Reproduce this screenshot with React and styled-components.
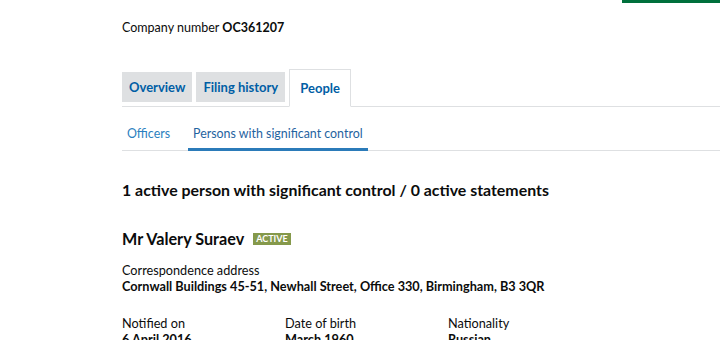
import React from "react";
import styled, { createGlobalStyle } from "styled-components";

const GlobalStyle = createGlobalStyle`
  body {
    margin: 0;
    background: #ffffff;
    font-family: Lato, "Liberation Sans", sans-serif;
    color: #0b0c0c;
  }
`;

const Page = styled.div`
  width: 720px;
  height: 340px;
  overflow: hidden;
`;

const TopBar = styled.div`
  display: flex;
  justify-content: flex-end;
`;

const SignIn = styled.div`
  width: 98px;
  height: 3px;
  background: #00703c;
`;

const Main = styled.div`
  padding-left: 122px;
`;

const CompanyNumber = styled.p`
  margin: 16px 0 0;
  font-size: 12.5px;
  line-height: 18px;
  strong {
    font-weight: 700;
  }
`;

const Tabs = styled.ul`
  display: flex;
  align-items: flex-end;
  gap: 4px;
  list-style: none;
  margin: 32px 0 0;
  padding: 0;
  border-bottom: 1px solid #dee0e2;
  height: 37px;
`;

const Tab = styled.li`
  box-sizing: border-box;
  display: flex;
  align-items: center;
  height: ${(p) => (p.$active ? "38px" : "30px")};
  margin-bottom: ${(p) => (p.$active ? "-1px" : "4px")};
  background: ${(p) => (p.$active ? "#ffffff" : "#dee0e2")};
  border: ${(p) => (p.$active ? "1px solid #dee0e2" : "none")};
  border-bottom: ${(p) => (p.$active ? "1px solid #ffffff" : "none")};
  padding: ${(p) => (p.$active ? "0 10px" : "0 7px")};
  font-size: 13px;
  font-weight: 700;
  color: #005ea5;
`;

const SubNav = styled.div`
  display: flex;
  align-items: flex-end;
  gap: 13px;
  border-bottom: 1px solid #dee0e2;
  height: 43px;
`;

const SubLink = styled.div`
  box-sizing: border-box;
  padding: 0 5px 6px;
  font-size: 12.4px;
  line-height: 16px;
  color: ${(p) => (p.$active ? "#1f63a0" : "#2b7fc0")};
  border-bottom: 3px solid ${(p) => (p.$active ? "#2b7bb9" : "transparent")};
  margin-bottom: -1px;
`;

const Heading = styled.h2`
  margin: 29px 0 0;
  font-size: 15.9px;
  line-height: 20px;
  font-weight: 700;
`;

const Person = styled.div`
  margin-top: 28px;
`;

const NameRow = styled.div`
  display: flex;
  align-items: center;
  gap: 9px;
`;

const Name = styled.h3`
  margin: 0;
  font-size: 16.2px;
  line-height: 22px;
  font-weight: 700;
`;

const Badge = styled.span`
  background: #85994b;
  color: #ffffff;
  font-size: 9px;
  font-weight: 700;
  line-height: 10px;
  padding: 1px 3px;
`;

const Field = styled.div`
  display: flex;
  flex-direction: column;
  font-size: 12.7px;
  line-height: 16px;
`;

const Label = styled.span`
  color: #0b0c0c;
`;

const Value = styled.span`
  font-weight: 700;
`;

const Details = styled.div`
  display: grid;
  grid-template-columns: repeat(3, 163px);
  margin-top: 21px;
`;

const AddressBlock = styled(Field)`
  margin-top: 12px;
`;

export default function App() {
  return (
    <Page>
      <GlobalStyle />
      <TopBar>
        <SignIn />
      </TopBar>
      <Main>
        <CompanyNumber>
          Company number <strong>OC361207</strong>
        </CompanyNumber>
        <Tabs>
          <Tab>Overview</Tab>
          <Tab>Filing history</Tab>
          <Tab $active>People</Tab>
        </Tabs>
        <SubNav>
          <SubLink>Officers</SubLink>
          <SubLink $active>Persons with significant control</SubLink>
        </SubNav>
        <Heading>1 active person with significant control / 0 active statements</Heading>
        <Person>
          <NameRow>
            <Name>Mr Valery Suraev</Name>
            <Badge>ACTIVE</Badge>
          </NameRow>
          <AddressBlock>
            <Label>Correspondence address</Label>
            <Value>Cornwall Buildings 45-51, Newhall Street, Office 330, Birmingham, B3 3QR</Value>
          </AddressBlock>
          <Details>
            <Field>
              <Label>Notified on</Label>
              <Value>6 April 2016</Value>
            </Field>
            <Field>
              <Label>Date of birth</Label>
              <Value>March 1960</Value>
            </Field>
            <Field>
              <Label>Nationality</Label>
              <Value>Russian</Value>
            </Field>
          </Details>
        </Person>
      </Main>
    </Page>
  );
}
